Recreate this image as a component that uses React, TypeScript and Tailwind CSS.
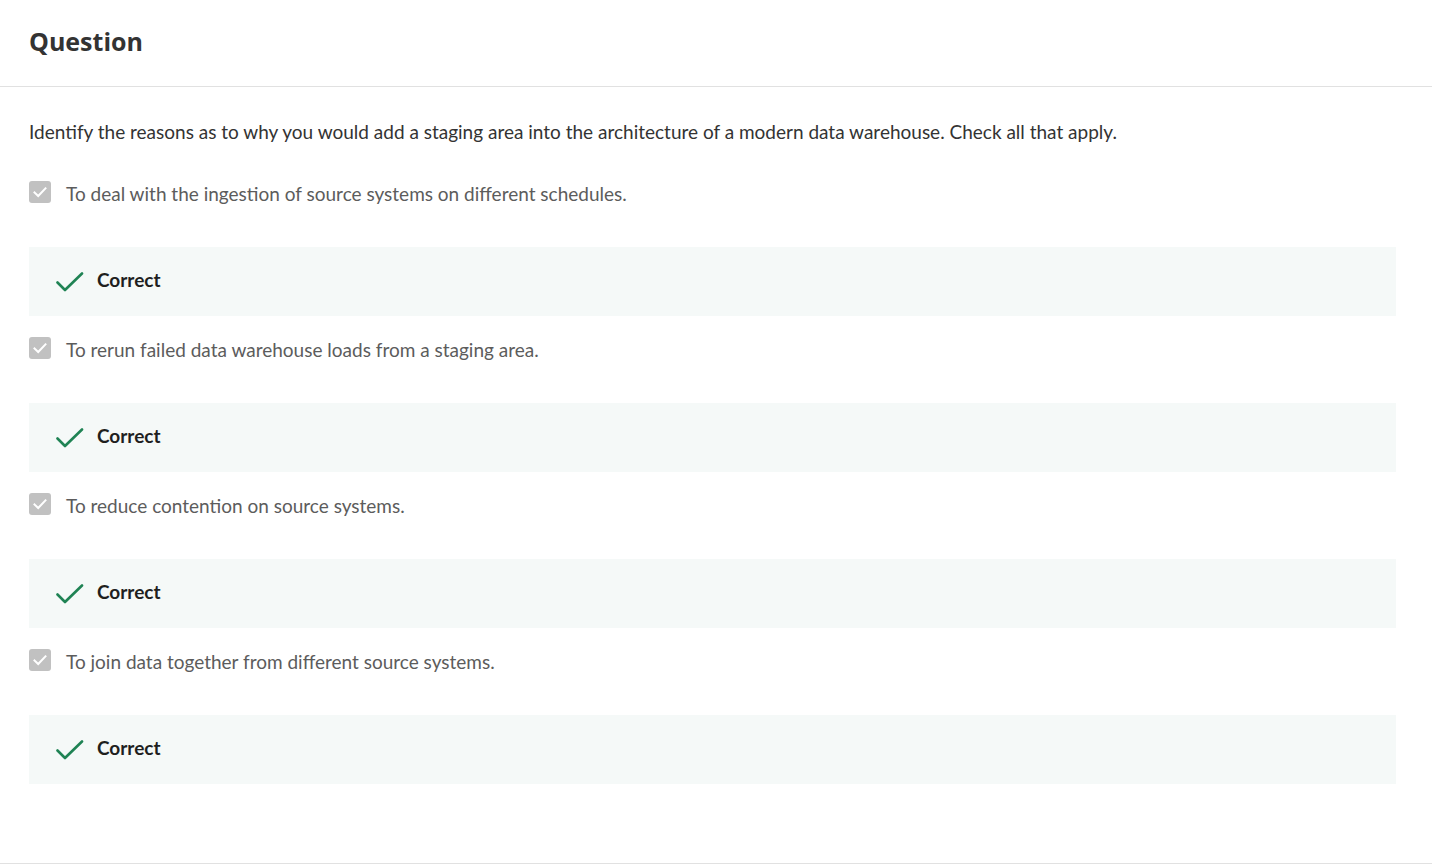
import React from "react";

const options = [
  "To deal with the ingestion of source systems on different schedules.",
  "To rerun failed data warehouse loads from a staging area.",
  "To reduce contention on source systems.",
  "To join data together from different source systems.",
];

function Checkbox() {
  return (
    <div className="w-[22px] h-[22px] rounded-[3px] bg-[#c1c1c1] flex items-center justify-center shrink-0 mb-[4px]">
      <svg width="16" height="16" viewBox="0 0 16 16" fill="none">
        <path d="M2.5 8.5 L6.2 12 L13.5 4.3" stroke="white" strokeWidth="2" strokeLinecap="square" />
      </svg>
    </div>
  );
}

function GreenCheck() {
  return (
    <svg width="28" height="22" viewBox="0 0 28 22" fill="none">
      <path d="M1.5 11.5 L9 19 L26 2.5" stroke="#1f8354" strokeWidth="2.6" strokeLinecap="round" strokeLinejoin="round" />
    </svg>
  );
}

export default function App() {
  return (
    <div className="w-[1432px] h-[864px] bg-white flex flex-col">
      <div className="h-[87px] border-b border-[#e1e1e1] px-[29px] flex items-center shrink-0">
        <h1 className="text-[25px] font-bold text-[#333] pb-[2px]" style={{ fontFamily: '"Open Sans", sans-serif' }}>
          Question
        </h1>
      </div>
      <div className="flex-1 border-b border-[#e1e1e1] pl-[29px] pr-[36px] pt-[31px]" style={{ fontFamily: 'Lato, sans-serif' }}>
        <p className="text-[19px] leading-[28px] text-[#333]">
          Identify the reasons as to why you would add a staging area into the architecture of a modern data warehouse. Check all that apply.
        </p>
        <div className="flex flex-col mt-[34px]">
          {options.map((o) => (
            <div key={o} className="flex flex-col">
              <div className="flex items-center h-[28px] gap-[15px]">
                <Checkbox />
                <span className="text-[19px] text-[#5c5c5c]">{o}</span>
              </div>
              <div className="mt-[39px] mb-[20px] h-[69px] bg-[#f5f9f8] flex items-center pl-[27px] gap-[13px]">
                <GreenCheck />
                <span className="text-[19px] font-bold text-[#1f1f1f] pb-[3px]">Correct</span>
              </div>
            </div>
          ))}
        </div>
      </div>
    </div>
  );
}
